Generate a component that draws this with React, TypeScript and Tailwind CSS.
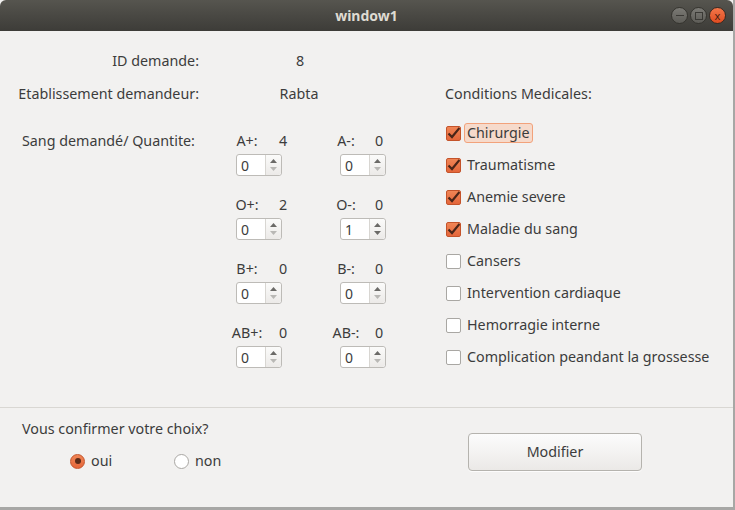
import { type ReactNode } from 'react'

const BLOOD = [
  { left: { label: 'A+:', qty: 4, value: 0 }, right: { label: 'A-:', qty: 0, value: 0 } },
  { left: { label: 'O+:', qty: 2, value: 0 }, right: { label: 'O-:', qty: 0, value: 1 } },
  { left: { label: 'B+:', qty: 0, value: 0 }, right: { label: 'B-:', qty: 0, value: 0 } },
  { left: { label: 'AB+:', qty: 0, value: 0 }, right: { label: 'AB-:', qty: 0, value: 0 } },
]

const CONDITIONS = [
  { label: 'Chirurgie', checked: true, focus: true },
  { label: 'Traumatisme', checked: true },
  { label: 'Anemie severe', checked: true },
  { label: 'Maladie du sang', checked: true },
  { label: 'Cansers', checked: false },
  { label: 'Intervention cardiaque', checked: false },
  { label: 'Hemorragie interne', checked: false },
  { label: 'Complication peandant la grossesse', checked: false },
]

function Arrow({ up, enabled }: { up?: boolean; enabled: boolean }) {
  return (
    <svg width="7" height="4" viewBox="0 0 7 4">
      <path d={up ? 'M0 4 L3.5 0 L7 4 Z' : 'M0 0 L3.5 4 L7 0 Z'} fill={enabled ? '#6b6a67' : '#b9b8b5'} />
    </svg>
  )
}

function Spin({ value }: { value: number }) {
  return (
    <div className="flex h-[22px] w-[46px] rounded-[3px] border border-[#bdbbb7] bg-white">
      <div className="flex w-[29px] items-center pl-[4px] text-[14px] text-[#3c3c3c]">{value}</div>
      <div className="flex w-[16px] flex-col items-center justify-center gap-[4px] rounded-r-[3px] border-l border-[#d8d6d2] bg-gradient-to-b from-[#fbfbfa] to-[#eceae8]">
        <Arrow up enabled />
        <Arrow enabled={value > 0} />
      </div>
    </div>
  )
}

function CheckBox({ checked }: { checked: boolean }) {
  if (!checked) {
    return <div className="h-[15px] w-[15px] rounded-[2px] border border-[#a9a7a3] bg-white" />
  }
  return (
    <div className="flex h-[15px] w-[15px] items-center justify-center rounded-[2px] border border-[#c4532a] bg-gradient-to-b from-[#f08555] to-[#e4663a]">
      <svg width="13" height="13" viewBox="0 0 13 13">
        <path d="M1.5 6.5 L5 10 L12.5 1" fill="none" stroke="#4a2518" strokeWidth="2.2" />
      </svg>
    </div>
  )
}

function Radio({ checked }: { checked: boolean }) {
  if (!checked) {
    return <div className="h-[15px] w-[15px] rounded-full border border-[#a9a7a3] bg-white" />
  }
  return (
    <div className="flex h-[15px] w-[15px] items-center justify-center rounded-full border border-[#c4532a] bg-gradient-to-b from-[#f08555] to-[#e4663a]">
      <div className="h-[6px] w-[6px] rounded-full bg-[#5a2a18]" />
    </div>
  )
}

function TitleButton({ children, close }: { children: ReactNode; close?: boolean }) {
  return (
    <div
      className={
        close
          ? 'flex h-[17px] w-[17px] items-center justify-center rounded-full border border-[#3a2a22] bg-gradient-to-b from-[#f37649] to-[#df4b1f]'
          : 'flex h-[17px] w-[17px] items-center justify-center rounded-full border border-[#35342f] bg-gradient-to-b from-[#7b7a75] to-[#5d5c57]'
      }
    >
      {children}
    </div>
  )
}

export default function App() {
  return (
    <div className="h-[510px] w-[735px] bg-[#a7a7a5] font-['Noto_Sans','DejaVu_Sans',sans-serif] text-[14.3px] text-[#3c3c3c]">
      <div className="flex h-[507px] w-[733px] flex-col bg-[#f2f1f0]">
        {/* title bar */}
        <div className="relative flex h-[31px] items-center justify-center rounded-t-[6px] bg-gradient-to-b from-[#56554f] to-[#3d3c38]">
          <span className="text-[14px] font-bold text-[#dfdbd2]">window1</span>
          <div className="absolute right-[7px] top-[7px] flex gap-[2px]">
            <TitleButton>
              <div className="h-[1.5px] w-[8px] bg-[#3a3935]" />
            </TitleButton>
            <TitleButton>
              <div className="h-[8px] w-[8px] border border-[#3a3935]" />
            </TitleButton>
            <TitleButton close>
              <span className="text-[11px] leading-none text-[#4a1e10]">x</span>
            </TitleButton>
          </div>
        </div>

        {/* main area */}
        <div className="flex h-[377px] border-b border-[#d9d7d3]">
          <div className="flex w-[445px] flex-col pt-[20px]">
            <div className="flex h-[20px] items-center">
              <span className="w-[199px] text-right">ID demande:</span>
              <span className="w-[202px] text-center">8</span>
            </div>
            <div className="mt-[13px] flex h-[20px] items-center">
              <span className="w-[199px] text-right">Etablissement demandeur:</span>
              <span className="w-[200px] text-center">Rabta</span>
            </div>
            <div className="mt-[28px] flex">
              <div className="flex h-[18px] w-[236px] items-center pl-[22px]">Sang demandé/ Quantite:</div>
              <div className="flex flex-col gap-[20px]">
                {BLOOD.map((row) => (
                  <div key={row.left.label} className="flex">
                    <div className="flex w-[104px] flex-col gap-[4px]">
                      <div className="flex h-[18px] items-center">
                        <div className="flex w-[22px] justify-center whitespace-nowrap">{row.left.label}</div>
                        <div className="ml-[18px] flex w-[14px] justify-center">{row.left.qty}</div>
                      </div>
                      <Spin value={row.left.value} />
                    </div>
                    <div className="flex flex-col gap-[4px]">
                      <div className="flex h-[18px] items-center">
                        <div className="flex w-[12px] justify-center whitespace-nowrap">{row.right.label}</div>
                        <div className="ml-[20px] flex w-[14px] justify-center">{row.right.qty}</div>
                      </div>
                      <Spin value={row.right.value} />
                    </div>
                  </div>
                ))}
              </div>
            </div>
          </div>

          <div className="flex flex-col pt-[53px]">
            <div className="flex h-[20px] items-center">Conditions Medicales:</div>
            <div className="mt-[13px] flex flex-col">
              {CONDITIONS.map((c) => (
                <div key={c.label} className="flex h-[32px] items-center">
                  <div className="ml-[1px]">
                    <CheckBox checked={c.checked} />
                  </div>
                  <span
                    className={
                      c.focus
                        ? 'ml-[3px] flex h-[20px] items-center rounded-[3px] border border-[#f2a27b] bg-[#f6dacb] px-[2px]'
                        : 'ml-[4px] flex h-[20px] items-center px-[2px]'
                    }
                  >
                    {c.label}
                  </span>
                </div>
              ))}
            </div>
          </div>
        </div>

        {/* confirmation */}
        <div className="flex flex-1">
          <div className="flex w-[468px] flex-col pl-[22px] pt-[11px]">
            <div className="flex h-[20px] items-center">Vous confirmer votre choix?</div>
            <div className="mt-[12px] ml-[48px] flex h-[20px] items-center">
              <Radio checked />
              <span className="ml-[6px] w-[83px]">oui</span>
              <Radio checked={false} />
              <span className="ml-[6px]">non</span>
            </div>
          </div>
          <div className="pt-[25px]">
            <button className="flex h-[38px] w-[174px] items-center justify-center rounded-[4px] border border-[#b5b3ae] bg-gradient-to-b from-[#fcfcfc] to-[#ebe9e7] text-[14.3px] text-[#3c3c3c] shadow-[0_1px_0_rgba(255,255,255,0.8)]">
              Modifier
            </button>
          </div>
        </div>
      </div>
    </div>
  )
}
